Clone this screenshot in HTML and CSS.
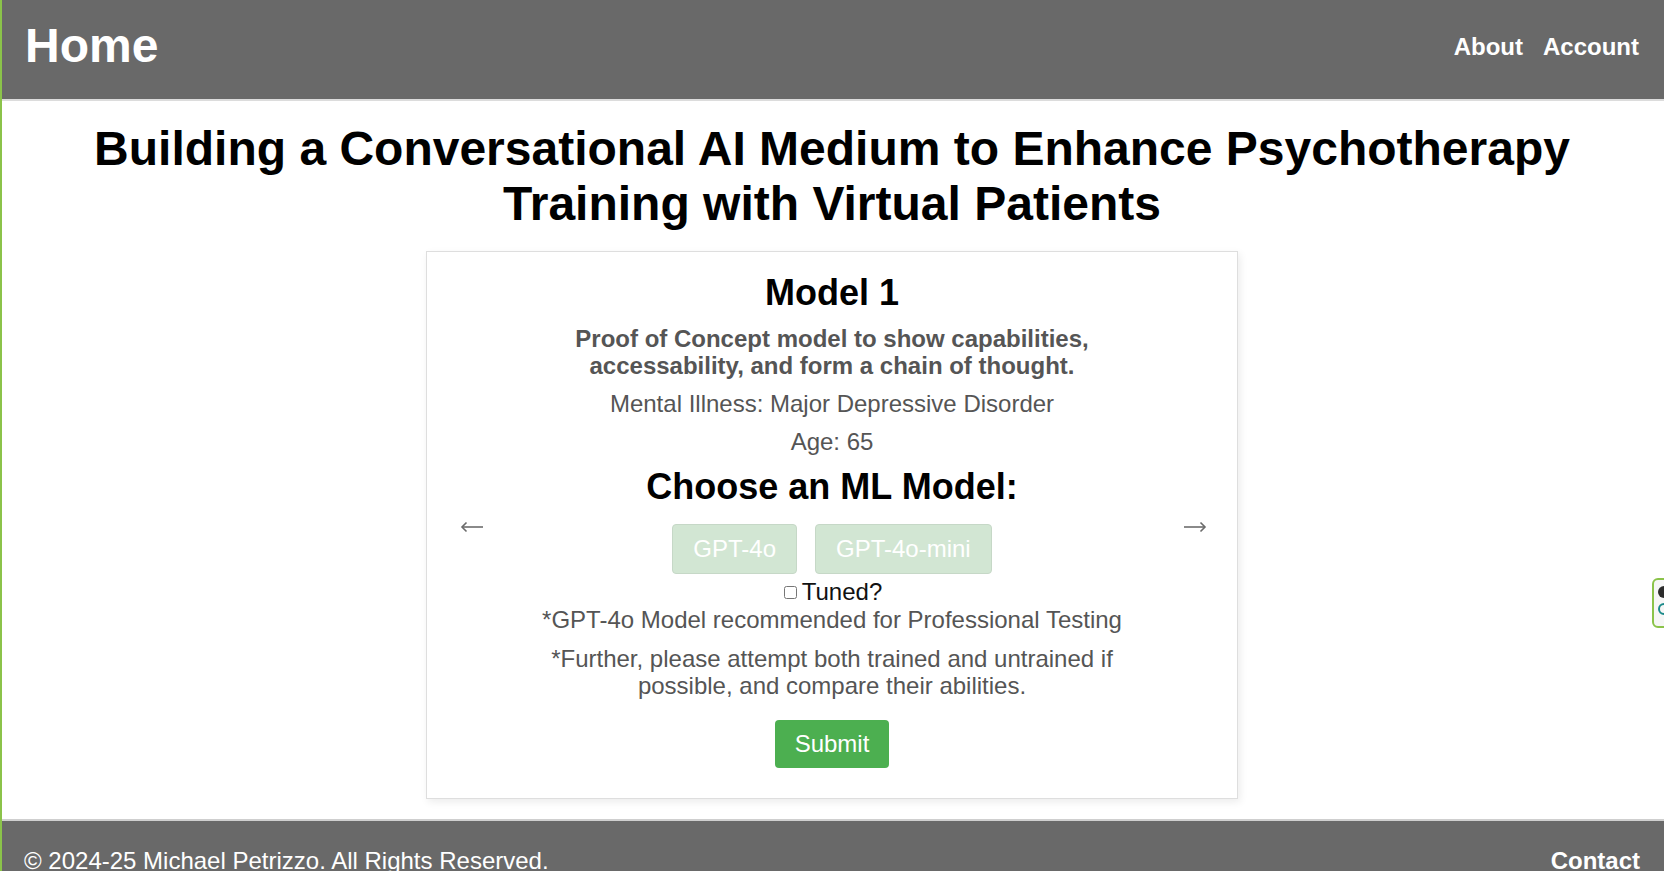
FILE: index.html
```html
<!DOCTYPE html>
<html lang="en">
<head>
<meta charset="utf-8">
<title>Home</title>
<link rel="stylesheet" href="styles.css">
</head>
<body>
<div class="edge-line"></div>
<header class="site-header">
  <a class="brand" href="#">Home</a>
  <nav class="nav">
    <a href="#">About</a>
    <a href="#">Account</a>
  </nav>
</header>

<main class="main">
  <h1 class="page-title">Building a Conversational AI Medium to Enhance Psychotherapy Training with Virtual Patients</h1>

  <section class="card">
    <button class="arrow arrow-left" aria-label="Previous">
      <svg width="24" height="12" viewBox="0 0 24 12"><path d="M2 6H23" stroke="#8a8a8a" stroke-width="2"/><path d="M6.5 1.5L2 6l4.5 4.5" fill="none" stroke="#6a6a6a" stroke-width="1.6"/></svg>
    </button>
    <div class="card-body">
      <h2 class="model-title">Model 1</h2>
      <p class="desc">Proof of Concept model to show capabilities, accessability, and form a chain of thought.</p>
      <p class="info">Mental Illness: Major Depressive Disorder</p>
      <p class="info info-age">Age: 65</p>
      <h2 class="choose-title">Choose an ML Model:</h2>
      <div class="model-buttons">
        <button class="model-btn">GPT-4o</button>
        <button class="model-btn">GPT-4o-mini</button>
      </div>
      <label class="tuned"><input type="checkbox" class="tuned-box">Tuned?</label>
      <p class="note note-first">*GPT-4o Model recommended for Professional Testing</p>
      <p class="note note-second">*Further, please attempt both trained and untrained if possible, and compare their abilities.</p>
      <button class="submit-btn">Submit</button>
    </div>
    <button class="arrow arrow-right" aria-label="Next">
      <svg width="24" height="12" viewBox="0 0 24 12"><path d="M1 6H22" stroke="#8a8a8a" stroke-width="2"/><path d="M17.5 1.5L22 6l-4.5 4.5" fill="none" stroke="#6a6a6a" stroke-width="1.6"/></svg>
    </button>
  </section>
</main>

<footer class="site-footer">
  <span class="copyright">© 2024-25 Michael Petrizzo. All Rights Reserved.</span>
  <a class="contact" href="#">Contact</a>
</footer>

<div class="side-widget">
  <span class="w-dot"></span>
  <span class="w-ring"></span>
</div>
</body>
</html>
```

FILE: styles.css
```css
* { box-sizing: border-box; }

html, body {
  margin: 0;
  padding: 0;
}

body {
  font-family: "Liberation Sans", Arial, sans-serif;
  font-size: 24px;
  color: #555;
  background: #fff;
}

.edge-line {
  position: fixed;
  left: 0;
  top: 0;
  bottom: 0;
  width: 2px;
  background: #8bc34a;
  z-index: 10;
}

.site-header {
  display: flex;
  align-items: center;
  justify-content: space-between;
  height: 101px;
  padding: 0 25px 8px 25px;
  background: #696969;
  border-bottom: 2px solid #dcdcdc;
}

.brand {
  color: #fff;
  font-size: 48px;
  font-weight: bold;
  text-decoration: none;
}

.nav {
  display: flex;
  gap: 20px;
  margin-top: 2px;
}

.nav a {
  color: #fff;
  font-size: 24px;
  font-weight: bold;
  text-decoration: none;
}

.main {
  padding: 0 20px;
}

.page-title {
  margin: 20px 0;
  font-size: 48px;
  font-weight: bold;
  color: #000;
  text-align: center;
  line-height: 1.15;
}

.card {
  display: flex;
  align-items: center;
  width: 812px;
  margin: 0 auto;
  padding: 20px 20px 30px 20px;
  border: 1px solid #dedede;
  background: #fff;
  box-shadow: 2px 3px 8px rgba(0, 0, 0, 0.08);
}

.arrow {
  flex: none;
  display: flex;
  width: 85px;
  padding: 0;
  margin-top: 14px;
  border: none;
  background: none;
}

.arrow-left {
  justify-content: flex-start;
  padding-left: 13px;
}

.arrow-right {
  justify-content: flex-end;
  padding-right: 10px;
}

.card-body {
  flex: 1;
  display: flex;
  flex-direction: column;
  align-items: center;
  text-align: center;
}

.model-title,
.choose-title {
  margin: 0 0 11px 0;
  font-size: 36px;
  font-weight: bold;
  color: #000;
  line-height: 1.15;
}

.choose-title {
  margin-bottom: 16px;
}

.desc {
  margin: 0 0 10px 0;
  font-weight: bold;
  line-height: 1.15;
  color: #555;
}

.info {
  margin: 0 0 10px 0;
  line-height: 1.15;
}

.info-age {
  margin-bottom: 11px;
}

.model-buttons {
  display: flex;
  gap: 18px;
  margin-bottom: 4px;
}

.model-btn {
  height: 50px;
  padding: 0 20px;
  font-family: inherit;
  font-size: 24px;
  color: #fff;
  background: #d2e6d3;
  border: 1px solid #c6d8c7;
  border-radius: 4px;
}

.tuned {
  display: flex;
  align-items: center;
  color: #111;
  line-height: 1.15;
}

.tuned-box {
  width: 13px;
  height: 13px;
  margin: 6px 5px 3px 2px;
}

.note {
  margin: 0;
  line-height: 1.15;
}

.note-first {
  margin-top: 1px;
  margin-bottom: 11px;
}

.note-second {
  margin-bottom: 20px;
}

.submit-btn {
  height: 48px;
  padding: 0 20px;
  font-family: inherit;
  font-size: 24px;
  color: #fff;
  background: #4caf50;
  border: none;
  border-radius: 4px;
}

.site-footer {
  display: flex;
  justify-content: space-between;
  margin-top: 20px;
  padding: 26px 24px 30px 24px;
  background: #696969;
  border-top: 2px solid #cfcfcf;
  color: #fff;
  line-height: 1.15;
}

.contact {
  color: #fff;
  font-weight: bold;
  text-decoration: none;
}

.side-widget {
  position: fixed;
  left: 1652px;
  top: 578px;
  width: 40px;
  height: 50px;
  border: 2px solid #8bc34a;
  border-radius: 6px;
  background: #f6f6f6;
  display: flex;
  flex-direction: column;
  gap: 5px;
  padding: 6px 4px;
}

.w-dot {
  display: block;
  width: 12px;
  height: 12px;
  border-radius: 50%;
  background: #2b2b2b;
}

.w-ring {
  display: block;
  width: 12px;
  height: 12px;
  border-radius: 50%;
  border: 2px solid #1a8a8a;
}
```
